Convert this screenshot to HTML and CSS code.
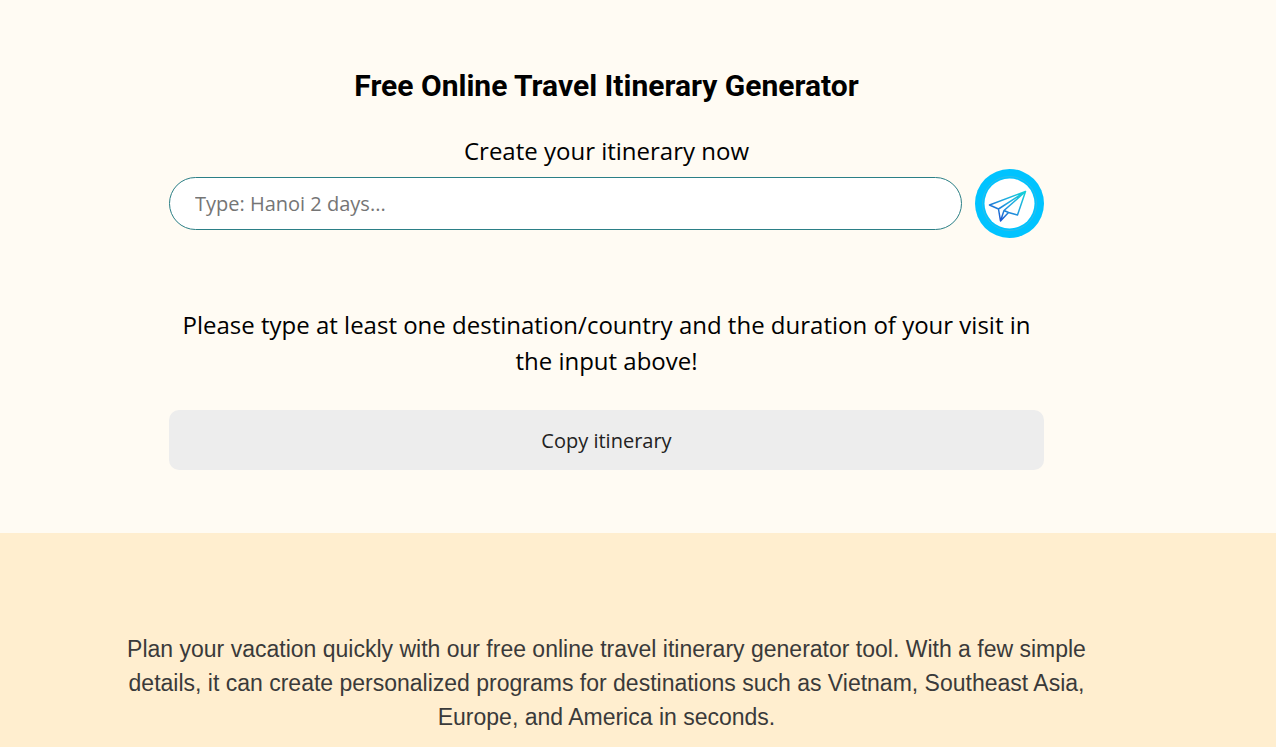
FILE: index.html
```
<!DOCTYPE html>
<html lang="en">
<head>
  <meta charset="UTF-8">
  <meta name="viewport" content="width=device-width, initial-scale=1.0">
  <title>Free Online Travel Itinerary Generator</title>
  <link rel="stylesheet" href="styles.css">
</head>
<body>

  <section class="generator">
    <h1>Free Online Travel Itinerary Generator</h1>
    <form class="itinerary-form">
      <label for="destination">Create your itinerary now</label>
      <div class="input-row">
        <input type="text" id="destination" class="form-input" placeholder="Type: Hanoi 2 days...">
        <button type="submit" class="send-button" aria-label="Send">
          <svg viewBox="0 0 69 69" width="69" height="69" fill="none">
            <defs>
              <linearGradient id="plane" gradientUnits="userSpaceOnUse" x1="46" y1="22" x2="27" y2="52">
                <stop offset="0" stop-color="#14cfd8"/>
                <stop offset="0.5" stop-color="#22a5e0"/>
                <stop offset="1" stop-color="#1c58d0"/>
              </linearGradient>
            </defs>
            <circle cx="34.5" cy="34.5" r="34.5" fill="#00c3ff"/>
            <circle cx="34.5" cy="34.5" r="27" stroke="#4fb9d6" stroke-width="0.6"/>
            <circle cx="34.5" cy="34.5" r="25" fill="#fff"/>
            <path d="M50.5 22.5 14.5 36l9 4zM50.5 22.5l-8 23.5-9-2.5M50.5 22.5 29 41.5l-3.5 10.5L23.5 40M29 41.5l4.5 2-8 8.500" stroke="url(#plane)" stroke-width="1.5" stroke-linejoin="round"/>
          </svg>
        </button>
      </div>
    </form>
    <p class="message">Please type at least one destination/country and the duration of your visit in the input above!</p>
    <button type="button" class="copy-button">Copy itinerary</button>
  </section>

  <section class="intro">
    <p>Plan your vacation quickly with our free online travel itinerary generator tool. With a few simple details, it can create personalized programs for destinations such as Vietnam, Southeast Asia, Europe, and America in seconds.</p>
  </section>

</body>
</html>
```
FILE: styles.css
```
* {
  box-sizing: border-box;
}

body {
  margin: 0;
  font-family: 'Open Sans', sans-serif;
  color: #000;
  background-color: #ffeecf;
}

.generator {
  padding: 64px 232px 63px 169px;
  background-color: #fffbf3;
}

h1 {
  margin: 0 0 25px;
  font-family: Roboto, sans-serif;
  font-size: 30px;
  line-height: 44px;
  font-weight: bold;
  text-align: center;
}

.itinerary-form label {
  display: block;
  font-size: 24px;
  line-height: 36px;
  text-align: center;
}

.input-row {
  display: flex;
  align-items: center;
  gap: 13px;
}

.form-input {
  flex: 1;
  min-width: 0;
  height: 53px;
  padding: 0 25px;
  border: 1px solid #2b7f86;
  border-radius: 27px;
  background-color: #fff;
  font-family: inherit;
  font-size: 20px;
}

.form-input::placeholder {
  color: #757575;
}

.send-button {
  display: flex;
  padding: 0;
  border: none;
  border-radius: 50%;
  background: none;
  cursor: pointer;
}

.message {
  margin: 69px 0 31px;
  font-size: 24px;
  line-height: 36px;
  text-align: center;
}

.copy-button {
  display: block;
  width: 100%;
  height: 60px;
  border: none;
  border-radius: 10px;
  background-color: #ededed;
  color: #222;
  font-family: inherit;
  font-size: 20px;
  cursor: pointer;
}

.intro {
  padding: 99px 183px 13px 120px;
  color: #3a3a3a;
  font-family: 'Liberation Sans', Arial, sans-serif;
  font-size: 23px;
  line-height: 34px;
  text-align: center;
}

.intro p {
  margin: 0;
}
```
